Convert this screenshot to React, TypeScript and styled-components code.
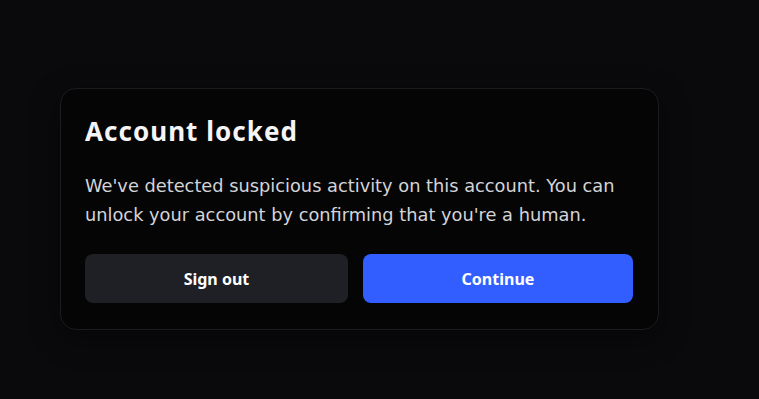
import React from 'react';
import styled, { createGlobalStyle } from 'styled-components';

const GlobalStyle = createGlobalStyle`
    html, body {
        margin: 0;
        padding: 0;
        background: #0a0a0d;
        font-family: 'Noto Sans', 'Open Sans', sans-serif;
    }
`;

function App() {
    return (
        <>
            <GlobalStyle />
            <Page>
                <Card>
                    <Title>Account locked</Title>
                    <Message>
                        We've detected suspicious activity on this account. You can unlock your
                        account by confirming that you're a human.
                    </Message>
                    <Actions>
                        <Button>Sign out</Button>
                        <Button primary>Continue</Button>
                    </Actions>
                </Card>
            </Page>
        </>
    );
}

export default App;

const Page = styled.div`
    min-height: 399px;
    padding: 88px 0 0 60px;
    box-sizing: border-box;
`;

const Card = styled.div`
    width: 599px;
    box-sizing: border-box;
    padding: 22px 25px 26px 24px;
    background: #050505;
    border: 1px solid #1b1c20;
    border-radius: 16px;
    box-shadow: 0 8px 30px rgba(0, 0, 0, 0.45);
`;

const Title = styled.h1`
    margin: 0 0 20px;
    font-size: 26px;
    font-weight: 700;
    line-height: 40px;
    letter-spacing: 0.04em;
    color: #f5f5f7;
`;

const Message = styled.p`
    margin: 0 0 25px;
    font-family: 'DejaVu Sans', sans-serif;
    font-size: 17.8px;
    line-height: 29px;
    color: #d4d4d8;
`;

const Actions = styled.div`
    display: flex;
    gap: 15px;
`;

const Button = styled.button<{ primary?: boolean }>`
    flex: 1 1 auto;
    height: 49px;
    border: none;
    border-radius: 8px;
    font-family: inherit;
    font-size: 16px;
    font-weight: 700;
    color: #ffffff;
    background: ${({ primary }) => (primary ? '#335eff' : '#1f2025')};
    cursor: pointer;
`;
